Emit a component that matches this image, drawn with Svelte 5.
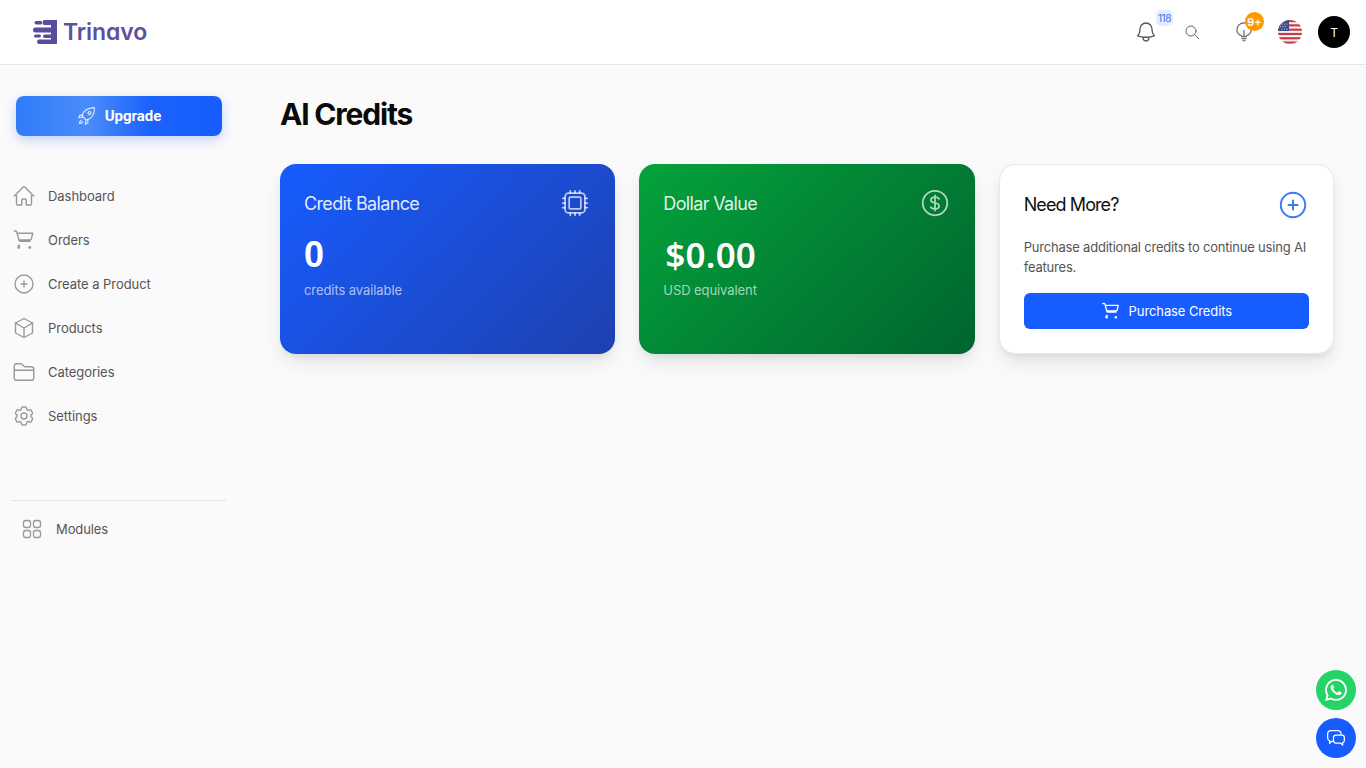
<script>
	const navItems = [
		{ label: 'Dashboard', icon: 'home' },
		{ label: 'Orders', icon: 'cart' },
		{ label: 'Create a Product', icon: 'plus' },
		{ label: 'Products', icon: 'box' },
		{ label: 'Categories', icon: 'folder' },
		{ label: 'Settings', icon: 'gear' }
	];
	// red stripes of the flag
	const stripes = [0, 2, 4, 6, 8, 10];
</script>

{#snippet cartIcon()}
	<path d="M2.25 3h1.39c.51 0 .95.34 1.09.83l.38 1.42m0 0 1.9 7.1c.13.5.58.85 1.09.85h9.9M5.11 5.25h15.64l-1.4 5.6c-.17.66-.76 1.15-1.45 1.15H6.9" />
	<path d="M7.5 17.25a1.5 1.5 0 0 0-1.5 1.5M6 19.5a.75.75 0 1 0 1.5 0 .75.75 0 0 0-1.5 0Zm11 0a.75.75 0 1 0 1.5 0 .75.75 0 0 0-1.5 0Z" />
{/snippet}

<div class="page">
	<header class="topbar">
		<div class="logo">
			<svg class="logo-mark" viewBox="0 0 24 24" width="24" height="24" fill="#5b4a9e">
				<rect x="1.500" y="1" width="8" height="3.500" rx="1.750" />
				<rect x="10" y="0" width="14" height="5" rx="1" />
				<rect x="18" y="0" width="6" height="24" rx="1" />
				<rect x="0" y="7.500" width="24" height="5" rx="2.500" />
				<rect x="1" y="14.500" width="7" height="3" rx="1.500" />
				<rect x="10" y="14.500" width="14" height="3.500" rx="1.750" />
				<rect x="4" y="19.500" width="20" height="4.500" rx="2.250" />
			</svg>
			<span>Trinavo</span>
		</div>
		<div class="actions">
			<div class="action bell">
				<svg viewBox="0 0 24 24" width="24" height="24" fill="none" stroke="#555" stroke-width="1.300" stroke-linecap="round" stroke-linejoin="round">
					<path d="M14.860 17.080a24 24 0 0 0 5.450-1.310A8.970 8.970 0 0 1 18 9.750V9A6 6 0 0 0 6 9v.75a8.970 8.970 0 0 1-2.310 6.020 24 24 0 0 0 5.450 1.310m5.720 0a24.250 24.250 0 0 1-5.720 0m5.720 0a3 3 0 1 1-5.720 0" />
				</svg>
				<span class="count">118</span>
			</div>
			<svg class="search" viewBox="0 0 24 24" width="16" height="16" fill="none" stroke="#666" stroke-width="1.500" stroke-linecap="round">
				<circle cx="10.500" cy="10.500" r="7.500" />
				<path d="m16 16 6 6" />
			</svg>
			<div class="action tip">
				<svg viewBox="0 0 24 24" width="20" height="20" fill="none" stroke="#666" stroke-width="1.400" stroke-linecap="round" stroke-linejoin="round">
					<path d="M9 16.500C5.800 15.300 3.500 12.900 3.500 9.500a8.500 8.500 0 0 1 17 0c0 3.400-2.300 5.800-5.500 7" />
					<path d="M12 10v7M9 17.500h6M9.500 20h5M10.500 22.500h3" />
				</svg>
				<span class="badge">9+</span>
			</div>
			<svg class="flag" viewBox="0 0 24 24" width="24" height="24">
				<defs>
					<clipPath id="flag-clip"><circle cx="12" cy="12" r="12" /></clipPath>
				</defs>
				<g clip-path="url(#flag-clip)">
					<rect width="24" height="24" fill="#f4f0f0" />
					<g fill="#c8394a">
						{#each stripes as s}
							<rect y={s * 2.15} width="24" height="2.150" />
						{/each}
					</g>
					<rect width="11" height="11" fill="#3f4a86" />
					<g fill="#e8e8f2">
						<circle cx="4" cy="4" r=".6" /><circle cx="6.500" cy="4" r=".6" /><circle cx="9" cy="4" r=".6" />
						<circle cx="2.500" cy="6.500" r=".6" /><circle cx="5" cy="6.500" r=".6" /><circle cx="7.500" cy="6.500" r=".6" />
						<circle cx="4" cy="9" r=".6" /><circle cx="6.500" cy="9" r=".6" /><circle cx="9" cy="9" r=".6" />
					</g>
				</g>
			</svg>
			<div class="avatar">T</div>
		</div>
	</header>

	<div class="body">
		<aside class="sidebar">
			<button class="upgrade">
				<svg viewBox="0 0 24 24" width="20" height="20" fill="none" stroke="#fff" stroke-opacity=".8" stroke-width="1.400" stroke-linecap="round" stroke-linejoin="round">
					<path d="M9 15 6 12c1-5 6-9.500 15-10 0 9-4.500 14-10 15l-2-2Z" />
					<path d="M7 11H3.500L2 14l4-.500M13 17v3.500L10 22l.500-4" />
					<circle cx="15" cy="8.500" r="1.800" />
					<path d="M5 17c-1.500 1-2 3-2 4 1 0 3-.500 4-2" />
				</svg>
				Upgrade
			</button>

			<nav class="nav">
				{#each navItems as item}
					<div class="nav-item">
						<svg viewBox="0 0 24 24" width="24" height="24" fill="none" stroke="#999" stroke-width="1.400" stroke-linecap="round" stroke-linejoin="round">
							{#if item.icon === 'home'}
								<path d="m2.250 12 8.950-8.950c.44-.44 1.150-.44 1.590 0L21.750 12M4.500 9.750V19.880c0 .62.500 1.120 1.130 1.120H9.750v-4.880c0-.62.500-1.120 1.130-1.120h2.250c.62 0 1.120.5 1.120 1.120V21h4.130c.62 0 1.120-.5 1.120-1.120V9.750" />
							{:else if item.icon === 'cart'}
								{@render cartIcon()}
							{:else if item.icon === 'plus'}
								<circle cx="12" cy="12" r="9" />
								<path d="M12 9v6M9 12h6" />
							{:else if item.icon === 'box'}
								<path d="M12 2.500 20.500 7v10L12 21.500 3.500 17V7L12 2.500Z" />
								<path d="M3.500 7 12 12l8.500-5M12 12v9.500" />
							{:else if item.icon === 'folder'}
								<path d="M2.250 12.750V6a2.250 2.250 0 0 1 2.250-2.250h4.380c.4 0 .78.16 1.060.44l2.120 2.120c.28.28.66.44 1.060.44h6.380A2.250 2.250 0 0 1 21.750 9v9a2.250 2.250 0 0 1-2.250 2.250h-15A2.250 2.250 0 0 1 2.250 18v-5.250Zm0-2.500h19.500" />
							{:else}
								<path d="M9.590 3.940c.09-.54.560-.94 1.110-.94h2.590c.55 0 1.020.4 1.110.94l.21 1.280c.06.37.31.68.64.87.07.04.15.08.22.13.32.19.72.25 1.070.12l1.220-.46a1.130 1.130 0 0 1 1.370.49l1.300 2.250c.27.48.16 1.080-.26 1.430l-1 .83c-.29.24-.43.6-.42.97v.25c-.01.37.13.73.42.97l1 .83c.42.35.53.95.26 1.43l-1.300 2.250a1.130 1.130 0 0 1-1.370.49l-1.220-.46c-.35-.13-.75-.07-1.070.12l-.22.13c-.33.19-.58.5-.64.87l-.21 1.280c-.09.54-.56.94-1.110.94H10.700c-.55 0-1.020-.4-1.110-.94l-.21-1.280c-.06-.37-.31-.68-.64-.87l-.22-.13c-.32-.19-.72-.25-1.070-.12l-1.220.46a1.130 1.130 0 0 1-1.370-.49l-1.300-2.250a1.130 1.130 0 0 1 .26-1.430l1-.83c.29-.24.43-.6.42-.97v-.25c.01-.37-.13-.73-.42-.97l-1-.83a1.130 1.130 0 0 1-.26-1.430l1.300-2.250a1.130 1.130 0 0 1 1.370-.49l1.220.46c.35.13.75.07 1.070-.12l.22-.13c.33-.19.58-.5.64-.87l.21-1.280Z" />
								<circle cx="12" cy="12" r="3" />
							{/if}
						</svg>
						<span>{item.label}</span>
					</div>
				{/each}
			</nav>

			<div class="divider"></div>

			<div class="modules">
				<svg viewBox="0 0 20 20" width="20" height="20" fill="none" stroke="#999" stroke-width="1.300">
					<rect x="1.500" y="1.500" width="7" height="7" rx="2.200" />
					<rect x="11.500" y="1.500" width="7" height="7" rx="2.200" />
					<rect x="1.500" y="11.500" width="7" height="7" rx="2.200" />
					<rect x="11.500" y="11.500" width="7" height="7" rx="2.200" />
				</svg>
				<span>Modules</span>
			</div>
		</aside>

		<main class="main">
			<h1>AI Credits</h1>
			<div class="cards">
				<section class="card blue">
					<div class="card-head">
						<h2>Credit Balance</h2>
						<svg class="head-icon" viewBox="0 0 24 24" width="28" height="28" fill="none" stroke="#fff" stroke-opacity=".7" stroke-width="1.500" stroke-linecap="round" stroke-linejoin="round">
							<rect x="3.500" y="3.500" width="17" height="17" rx="3" />
							<rect x="7" y="7" width="10" height="10" rx="1" />
							<path d="M8 1.500v2M12 1.500v2M16 1.500v2M8 20.500v2M12 20.500v2M16 20.500v2M1.500 8h2M1.500 12h2M1.500 16h2M20.500 8h2M20.500 12h2M20.500 16h2" />
						</svg>
					</div>
					<div class="amount">0</div>
					<p class="note">credits available</p>
				</section>

				<section class="card green">
					<div class="card-head">
						<h2>Dollar Value</h2>
						<svg class="head-icon" viewBox="0 0 24 24" width="28" height="28" fill="none" stroke="#fff" stroke-opacity=".7" stroke-width="1.500" stroke-linecap="round" stroke-linejoin="round">
							<circle cx="12" cy="12" r="10.500" />
							<path d="M12 5.500v13M15.500 8.500c-.5-1-1.900-1.500-3.500-1.500-2 0-3.500 1-3.500 2.500S10 11.700 12 12s3.500 1 3.500 2.500S14 17 12 17c-1.600 0-3-.5-3.500-1.500" />
						</svg>
					</div>
					<div class="amount money">$0.00</div>
					<p class="note">USD equivalent</p>
				</section>

				<section class="card white">
					<div class="card-head">
						<h2>Need More?</h2>
						<svg class="head-icon" viewBox="0 0 28 28" width="28" height="28" fill="none" stroke="#3b7bf5" stroke-width="2" stroke-linecap="round">
							<circle cx="14" cy="14" r="12.200" />
							<path d="M14 9.500v9M9.500 14h9" />
						</svg>
					</div>
					<p class="desc">Purchase additional credits to continue using AI features.</p>
					<button class="purchase">
						<svg viewBox="0 0 24 24" width="20" height="20" fill="none" stroke="#fff" stroke-width="1.600" stroke-linecap="round" stroke-linejoin="round">
							{@render cartIcon()}
						</svg>
						Purchase Credits
					</button>
				</section>
			</div>
		</main>
	</div>

	<div class="floating">
		<div class="fab wa">
			<svg viewBox="0 0 24 24" width="22" height="22" fill="#fff">
				<path d="M17.470 14.380c-.3-.15-1.760-.87-2.030-.97-.27-.1-.47-.15-.67.15-.2.3-.77.97-.94 1.160-.17.2-.35.22-.64.08-.3-.15-1.260-.46-2.390-1.480-.88-.79-1.480-1.770-1.650-2.060-.17-.3-.02-.46.13-.61.13-.13.3-.35.45-.52.15-.17.2-.3.3-.5.1-.2.05-.37-.03-.52-.07-.15-.67-1.620-.92-2.220-.24-.58-.49-.5-.67-.51h-.57c-.2 0-.52.07-.79.37-.27.3-1.040 1.020-1.040 2.480s1.060 2.880 1.210 3.070c.15.2 2.100 3.200 5.080 4.480.71.3 1.260.49 1.690.62.71.23 1.360.2 1.870.12.57-.08 1.760-.72 2.010-1.410.25-.7.25-1.290.17-1.410-.07-.13-.27-.2-.56-.35Z" />
				<path d="M12.050 21.790h0a9.870 9.870 0 0 1-5.030-1.380l-.36-.21-3.740.98 1-3.650-.24-.37a9.860 9.860 0 0 1-1.510-5.260c0-5.450 4.440-9.880 9.890-9.880a9.830 9.830 0 0 1 6.990 2.900 9.830 9.830 0 0 1 2.890 6.990c0 5.450-4.440 9.880-9.890 9.880ZM20.460 3.490A11.820 11.820 0 0 0 12.050 0C5.500 0 .16 5.340.16 11.890c0 2.100.55 4.140 1.590 5.950L.06 24l6.300-1.650a11.880 11.880 0 0 0 5.680 1.450h.01c6.550 0 11.890-5.340 11.890-11.890 0-3.180-1.240-6.160-3.480-8.410Z" />
			</svg>
		</div>
		<div class="fab chat">
			<svg viewBox="0 0 24 24" width="20" height="20" fill="none" stroke="#fff" stroke-width="1.500" stroke-linecap="round" stroke-linejoin="round">
				<path d="M8 16H6.500l-2 2.500V15.700C3 15 2 13.600 2 12V7a4 4 0 0 1 4-4h8a4 4 0 0 1 4 4v.500" />
				<path d="M12 8.500h7a3 3 0 0 1 3 3v3.500a3 3 0 0 1-2 2.800v2.700L17.500 18H12a3 3 0 0 1-3-3v-3.500a3 3 0 0 1 3-3Z" />
			</svg>
		</div>
	</div>
</div>

<style>
	:global(body) {
		background: #fafafa;
		font-family: 'Inter', 'Liberation Sans', sans-serif;
	}
	.page {
		height: 768px;
		overflow: hidden;
		position: relative;
	}
	.topbar {
		height: 64px;
		background: #fff;
		border-bottom: 1px solid #e5e5e5;
		display: flex;
		align-items: center;
		justify-content: space-between;
		padding: 0 16px 0 33px;
	}
	.logo {
		display: flex;
		align-items: center;
		gap: 6px;
	}
	.logo span {
		font-family: 'Inter', sans-serif;
		font-feature-settings: 'cv11';
		font-size: 23px;
		font-weight: 600;
		letter-spacing: -0.1px;
		color: #5f4f9f;
	}
	.actions {
		display: flex;
		align-items: center;
	}
	.action {
		position: relative;
		display: flex;
	}
	.bell {
		margin-right: 26px;
	}
	.count {
		position: absolute;
		left: 22px;
		top: -10px;
		background: #e4ecff;
		color: #3d6ff0;
		font-size: 10px;
		letter-spacing: -0.5px;
		line-height: 16px;
		padding: 0 2px;
		border-radius: 5px;
	}
	.search {
		margin-right: 34px;
	}
	.tip {
		margin-right: 24px;
	}
	.badge {
		position: absolute;
		left: 11px;
		top: -10px;
		width: 19px;
		height: 19px;
		border-radius: 50%;
		background: #ff9800;
		color: #fff;
		font-size: 11px;
		font-weight: 600;
		display: flex;
		align-items: center;
		justify-content: center;
	}
	.flag {
		margin-right: 16px;
	}
	.avatar {
		width: 32px;
		height: 32px;
		border-radius: 50%;
		background: #000;
		color: #fff;
		font-size: 12px;
		display: flex;
		align-items: center;
		justify-content: center;
	}
	.body {
		display: flex;
	}
	.sidebar {
		width: 240px;
		flex-shrink: 0;
		padding: 31px 14px 0 12px;
		box-sizing: border-box;
	}
	.upgrade {
		width: 206px;
		height: 40px;
		margin: 0 0 0 4px;
		border: 0;
		border-radius: 8px;
		background: linear-gradient(90deg, #2f7bfa 0%, #4a8cfb 35%, #1b62fb 65%, #175cff 100%);
		box-shadow: 0 4px 12px rgba(23, 92, 255, 0.25);
		color: #fff;
		font-family: 'Roboto', sans-serif;
		font-size: 15px;
		font-weight: 700;
		display: flex;
		align-items: center;
		justify-content: center;
		gap: 8px;
	}
	.nav {
		margin-top: 40px;
		display: flex;
		flex-direction: column;
		gap: 4px;
	}
	.nav-item {
		height: 40px;
		display: flex;
		align-items: center;
		gap: 12px;
		font-size: 13px;
		letter-spacing: -0.05px;
		color: #555;
	}
	.divider {
		margin-top: 64px;
		height: 1px;
		background: #e2e2e2;
	}
	.modules {
		margin: 18px 0 0 10px;
		display: flex;
		align-items: center;
		gap: 14px;
		font-size: 13px;
		letter-spacing: -0.1px;
		color: #555;
	}
	.main {
		flex: 1;
		padding: 31px 32px 0 40px;
		min-width: 0;
	}
	h1 {
		margin: 0;
		font-size: 30px;
		line-height: 36px;
		font-weight: 700;
		letter-spacing: -1.2px;
		color: #0a0a0a;
	}
	.cards {
		margin-top: 32px;
		display: grid;
		grid-template-columns: repeat(3, 1fr);
		gap: 24px;
	}
	.card {
		height: 190px;
		box-sizing: border-box;
		border-radius: 16px;
		padding: 24px;
		box-shadow: 0 10px 20px -3px rgba(0, 0, 0, 0.1), 0 4px 8px -4px rgba(0, 0, 0, 0.1);
	}
	.blue {
		background: linear-gradient(135deg, #175cff, #1e40af);
	}
	.green {
		background: linear-gradient(135deg, #04a33a, #006430);
	}
	.white {
		background: #fff;
		border: 1px solid #e8e8e8;
	}
	.card-head {
		display: flex;
		align-items: center;
		justify-content: space-between;
		height: 30px;
	}
	.head-icon {
		margin-right: 2px;
	}
	.white .card-head {
		height: 31px;
	}
	h2 {
		margin: 0;
		font-size: 18px;
		font-weight: 400;
		letter-spacing: -0.65px;
		color: rgba(255, 255, 255, 0.9);
	}
	.white h2 {
		color: #111;
		letter-spacing: -0.9px;
	}
	.amount {
		margin-top: 17px;
		font-family: 'Liberation Sans', sans-serif;
		font-size: 36px;
		line-height: 40px;
		font-weight: 700;
		color: #fff;
	}
	.money {
		font-family: 'Noto Sans', sans-serif;
		font-weight: 600;
		font-size: 35px;
		margin-left: 2px;
		letter-spacing: 0.2px;
	}
	.note {
		margin: 7px 0 0;
		font-size: 13px;
		letter-spacing: -0.08px;
		color: rgba(255, 255, 255, 0.65);
	}
	.desc {
		margin: 17px 0 0;
		font-size: 13px;
		line-height: 20px;
		letter-spacing: -0.2px;
		color: #555;
	}
	.purchase {
		width: 100%;
		height: 36px;
		margin-top: 16px;
		border: 0;
		border-radius: 6px;
		background: #175cff;
		color: #fff;
		font-family: inherit;
		font-size: 13px;
		font-weight: 400;
		letter-spacing: -0.1px;
		display: flex;
		align-items: center;
		justify-content: center;
		gap: 8px;
	}
	.floating {
		position: absolute;
		right: 10px;
		bottom: 10px;
		display: flex;
		flex-direction: column;
		gap: 8px;
	}
	.fab {
		width: 40px;
		height: 40px;
		border-radius: 50%;
		display: flex;
		align-items: center;
		justify-content: center;
	}
	.wa {
		background: #25d366;
	}
	.chat {
		background: #175cff;
	}
</style>
